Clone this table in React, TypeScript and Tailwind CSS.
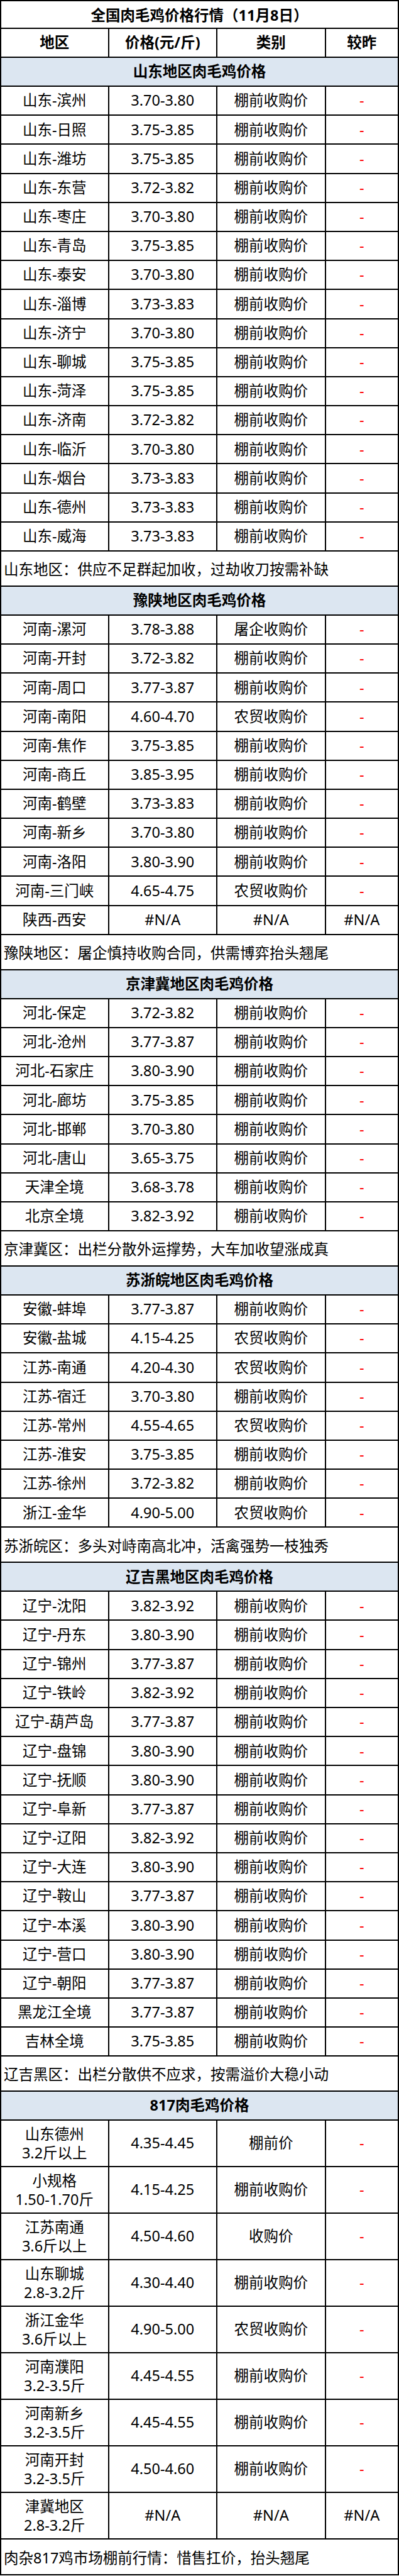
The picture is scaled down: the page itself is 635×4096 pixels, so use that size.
import React from "react"

type Row = {
  region: string
  price: string
  kind: string
  change?: string
}

type Block = {
  title: string
  rows: Row[]
  note: string
}

const mk = (region: string, price: string, kind = "棚前收购价", change = "-"): Row => ({
  region,
  price,
  kind,
  change,
})

const blocks: Block[] = [
  {
    title: "山东地区肉毛鸡价格",
    rows: [
      mk("山东-滨州", "3.70-3.80"),
      mk("山东-日照", "3.75-3.85"),
      mk("山东-潍坊", "3.75-3.85"),
      mk("山东-东营", "3.72-3.82"),
      mk("山东-枣庄", "3.70-3.80"),
      mk("山东-青岛", "3.75-3.85"),
      mk("山东-泰安", "3.70-3.80"),
      mk("山东-淄博", "3.73-3.83"),
      mk("山东-济宁", "3.70-3.80"),
      mk("山东-聊城", "3.75-3.85"),
      mk("山东-菏泽", "3.75-3.85"),
      mk("山东-济南", "3.72-3.82"),
      mk("山东-临沂", "3.70-3.80"),
      mk("山东-烟台", "3.73-3.83"),
      mk("山东-德州", "3.73-3.83"),
      mk("山东-威海", "3.73-3.83"),
    ],
    note: "山东地区：供应不足群起加收，过劫收刀按需补缺",
  },
  {
    title: "豫陕地区肉毛鸡价格",
    rows: [
      mk("河南-漯河", "3.78-3.88", "屠企收购价"),
      mk("河南-开封", "3.72-3.82"),
      mk("河南-周口", "3.77-3.87"),
      mk("河南-南阳", "4.60-4.70", "农贸收购价"),
      mk("河南-焦作", "3.75-3.85"),
      mk("河南-商丘", "3.85-3.95"),
      mk("河南-鹤壁", "3.73-3.83"),
      mk("河南-新乡", "3.70-3.80"),
      mk("河南-洛阳", "3.80-3.90"),
      mk("河南-三门峡", "4.65-4.75", "农贸收购价"),
      mk("陕西-西安", "#N/A", "#N/A", "#N/A"),
    ],
    note: "豫陕地区：屠企慎持收购合同，供需博弈抬头翘尾",
  },
  {
    title: "京津冀地区肉毛鸡价格",
    rows: [
      mk("河北-保定", "3.72-3.82"),
      mk("河北-沧州", "3.77-3.87"),
      mk("河北-石家庄", "3.80-3.90"),
      mk("河北-廊坊", "3.75-3.85"),
      mk("河北-邯郸", "3.70-3.80"),
      mk("河北-唐山", "3.65-3.75"),
      mk("天津全境", "3.68-3.78"),
      mk("北京全境", "3.82-3.92"),
    ],
    note: "京津冀区：出栏分散外运撑势，大车加收望涨成真",
  },
  {
    title: "苏浙皖地区肉毛鸡价格",
    rows: [
      mk("安徽-蚌埠", "3.77-3.87"),
      mk("安徽-盐城", "4.15-4.25", "农贸收购价"),
      mk("江苏-南通", "4.20-4.30", "农贸收购价"),
      mk("江苏-宿迁", "3.70-3.80"),
      mk("江苏-常州", "4.55-4.65", "农贸收购价"),
      mk("江苏-淮安", "3.75-3.85"),
      mk("江苏-徐州", "3.72-3.82"),
      mk("浙江-金华", "4.90-5.00", "农贸收购价"),
    ],
    note: "苏浙皖区：多头对峙南高北冲，活禽强势一枝独秀",
  },
  {
    title: "辽吉黑地区肉毛鸡价格",
    rows: [
      mk("辽宁-沈阳", "3.82-3.92"),
      mk("辽宁-丹东", "3.80-3.90"),
      mk("辽宁-锦州", "3.77-3.87"),
      mk("辽宁-铁岭", "3.82-3.92"),
      mk("辽宁-葫芦岛", "3.77-3.87"),
      mk("辽宁-盘锦", "3.80-3.90"),
      mk("辽宁-抚顺", "3.80-3.90"),
      mk("辽宁-阜新", "3.77-3.87"),
      mk("辽宁-辽阳", "3.82-3.92"),
      mk("辽宁-大连", "3.80-3.90"),
      mk("辽宁-鞍山", "3.77-3.87"),
      mk("辽宁-本溪", "3.80-3.90"),
      mk("辽宁-营口", "3.80-3.90"),
      mk("辽宁-朝阳", "3.77-3.87"),
      mk("黑龙江全境", "3.77-3.87"),
      mk("吉林全境", "3.75-3.85"),
    ],
    note: "辽吉黑区：出栏分散供不应求，按需溢价大稳小动",
  },
]

// 817 rows carry a two-line region label
const rows817: { name: string; spec: string; price: string; kind: string; change: string }[] = [
  { name: "山东德州", spec: "3.2斤以上", price: "4.35-4.45", kind: "棚前价", change: "-" },
  { name: "小规格", spec: "1.50-1.70斤", price: "4.15-4.25", kind: "棚前收购价", change: "-" },
  { name: "江苏南通", spec: "3.6斤以上", price: "4.50-4.60", kind: "收购价", change: "-" },
  { name: "山东聊城", spec: "2.8-3.2斤", price: "4.30-4.40", kind: "棚前收购价", change: "-" },
  { name: "浙江金华", spec: "3.6斤以上", price: "4.90-5.00", kind: "农贸收购价", change: "-" },
  { name: "河南濮阳", spec: "3.2-3.5斤", price: "4.45-4.55", kind: "棚前收购价", change: "-" },
  { name: "河南新乡", spec: "3.2-3.5斤", price: "4.45-4.55", kind: "棚前收购价", change: "-" },
  { name: "河南开封", spec: "3.2-3.5斤", price: "4.50-4.60", kind: "棚前收购价", change: "-" },
  { name: "津冀地区", spec: "2.8-3.2斤", price: "#N/A", kind: "#N/A", change: "#N/A" },
]

const grid = "grid grid-cols-[171.5px_172.5px_172.5px_1fr] border-b-2 border-black"
const cell = "flex items-center justify-center border-r-2 border-black"

function Change({ value }: { value: string }) {
  return (
    <div className="flex items-center justify-center">
      <span className={value === "-" ? "text-[#ff0000]" : ""}>{value}</span>
    </div>
  )
}

function DataRow({ row }: { row: Row }) {
  return (
    <div className={`${grid} h-[46.2px]`}>
      <div className={cell}>{row.region}</div>
      <div className={cell}>{row.price}</div>
      <div className={cell}>{row.kind}</div>
      <Change value={row.change ?? "-"} />
    </div>
  )
}

function SectionTitle({ title }: { title: string }) {
  return (
    <div className="flex h-[46px] items-center justify-center border-b-2 border-black bg-[#dce6f1] font-bold">
      {title}
    </div>
  )
}

function Note({ text, tall = false }: { text: string; tall?: boolean }) {
  return (
    <div
      className={`flex items-center border-b-2 border-black pl-1 pt-1 ${
        tall ? "h-[56.8px]" : "h-[55.8px]"
      }`}
    >
      {text}
    </div>
  )
}

export default function App() {
  return (
    <div className="w-[635px] bg-white text-[23.5px] leading-none text-black font-['Noto_Sans','Noto_Sans_CJK_SC',sans-serif]">
      <div className="border-x-2 border-t-2 border-black">
        <div className="flex h-[44px] items-center justify-center border-b-2 border-black pt-1 font-bold">
          全国肉毛鸡价格行情（11月8日）
        </div>
        <div className={`${grid} h-[46px] font-bold`}>
          <div className={cell}>地区</div>
          <div className={cell}>价格(元/斤)</div>
          <div className={cell}>类别</div>
          <div className="flex items-center justify-center">较昨</div>
        </div>

        {blocks.map((b) => (
          <React.Fragment key={b.title}>
            <SectionTitle title={b.title} />
            {b.rows.map((r) => (
              <DataRow key={r.region} row={r} />
            ))}
            <Note text={b.note} />
          </React.Fragment>
        ))}

        <SectionTitle title="817肉毛鸡价格" />
        {rows817.map((r) => (
          <div key={r.name} className={`${grid} h-[74px]`}>
            <div className={`${cell} flex-col leading-[30px]`}>
              <span>{r.name}</span>
              <span>{r.spec}</span>
            </div>
            <div className={cell}>{r.price}</div>
            <div className={cell}>{r.kind}</div>
            <Change value={r.change} />
          </div>
        ))}
        <Note text="肉杂817鸡市场棚前行情：惜售扛价，抬头翘尾" tall />
      </div>
    </div>
  )
}
